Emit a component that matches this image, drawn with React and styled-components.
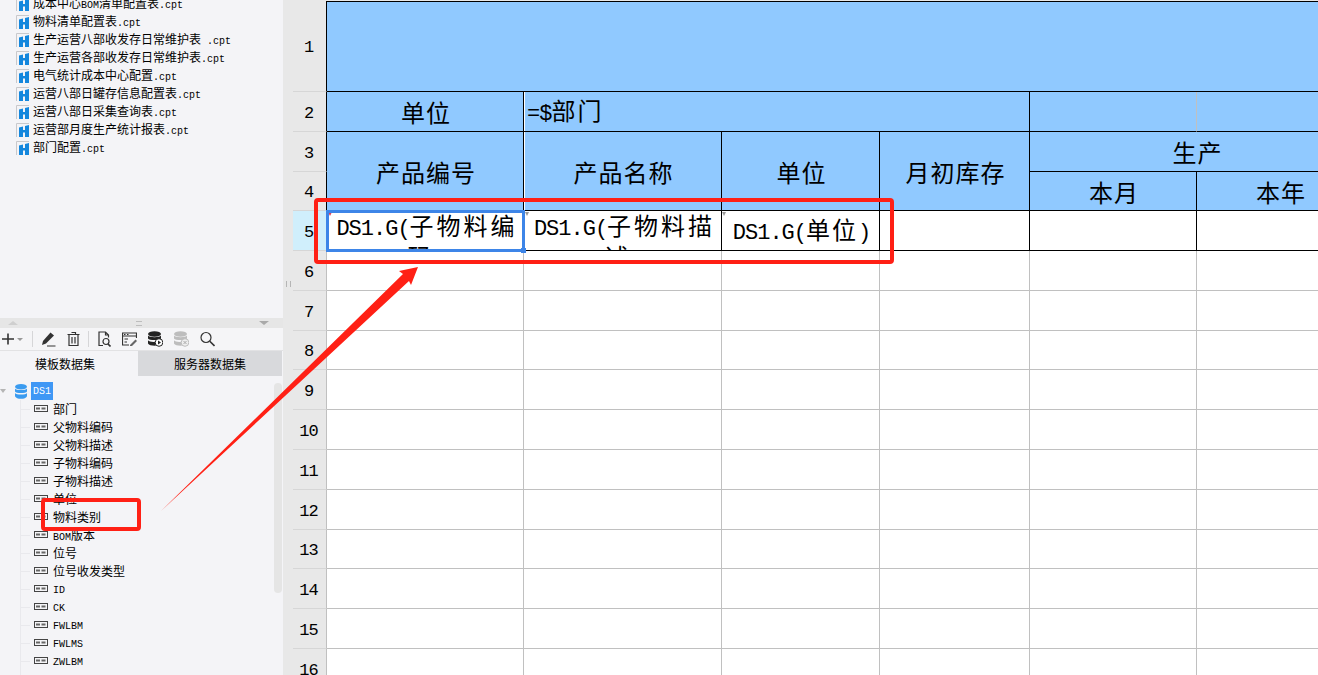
import React from "react";
import styled, { createGlobalStyle } from "styled-components";

const Global = createGlobalStyle`
  html, body { margin: 0; padding: 0; background: #fff; }
  body { font-family: "Noto Sans CJK SC", sans-serif; color: #000; }
`;

const Page = styled.div`
  position: relative;
  display: flex;
  width: 1318px;
  height: 675px;
  overflow: hidden;
`;

const Sidebar = styled.aside`
  flex: 0 0 283px;
  display: flex;
  flex-direction: column;
  height: 675px;
  overflow: hidden;
  background: #f4f4f7;
`;

const FileList = styled.ul`
  flex: 0 0 318px;
  margin: 0;
  padding: 0;
  list-style: none;
  overflow: hidden;
`;

const FileRow = styled.li`
  display: flex;
  align-items: center;
  gap: 4px;
  height: 18.1px;
  padding-left: 16px;
  font-size: 12px;
  line-height: 18px;
  white-space: nowrap;
  &:first-child { margin-top: -5px; }
`;

const Mono = styled.span`
  font-family: "Liberation Mono", monospace;
  font-size: 10px;
  white-space: pre;
`;

const SplitBar = styled.div`
  flex: 0 0 10px;
  display: flex;
  align-items: center;
  justify-content: space-between;
  padding: 0 14px 0 8px;
  background: #e6e6e6;
`;

const Tri = styled.span`
  width: 0;
  height: 0;
  border-left: 5px solid transparent;
  border-right: 5px solid transparent;
  ${(p) => (p.$down ? "border-top: 4px solid #a9a9a9;" : "border-bottom: 4px solid #cfcfcf;")}
`;

const Grip = styled.span`
  width: 6px;
  height: 3px;
  border-top: 1px solid #bdbdbd;
  border-bottom: 1px solid #bdbdbd;
`;

const Toolbar = styled.div`
  flex: 0 0 22px;
  display: flex;
  align-items: center;
  padding-left: 2px;
  border-bottom: 1px solid #e2e2e4;
  background: #f5f5f7;
`;

const ToolIcon = styled.svg`
  flex: none;
  width: ${(p) => p.$w || 16}px;
  height: 16px;
  margin-left: ${(p) => p.$gap || 0}px;
  fill: ${(p) => p.$fill || "none"};
  stroke: ${(p) => (p.$fill ? "none" : "#333")};
  stroke-width: ${(p) => p.$weight || 1.2};
`;

const ToolSep = styled.span`
  flex: none;
  width: 1px;
  height: 16px;
  margin-left: ${(p) => p.$gap}px;
  background: #d6d6d8;
`;

const Tabs = styled.div`
  flex: 0 0 25px;
  display: flex;
  width: 282px;
  font-size: 12px;
`;

const Tab = styled.div`
  display: flex;
  align-items: center;
  justify-content: center;
  width: ${(p) => (p.$active ? 138 : 144)}px;
  padding-right: ${(p) => (p.$active ? 8 : 0)}px;
  box-sizing: border-box;
  background: ${(p) => (p.$active ? "#f4f4f7" : "#d8d9dc")};
`;

const TreeArea = styled.div`
  position: relative;
  flex: 1;
  padding-top: 6px;
  overflow: hidden;
`;

const GuideLine = styled.span`
  position: absolute;
  left: 20px;
  top: 24px;
  bottom: 0;
  width: 1px;
  background: #e9e9ed;
`;

const Scrollbar = styled.span`
  position: absolute;
  left: 274px;
  top: 7px;
  width: 8px;
  height: 210px;
  border-radius: 4px;
  background: #e5e5e5;
`;

const RootRow = styled.div`
  display: flex;
  align-items: center;
  height: 18px;
  font-size: 12px;
`;

const Caret = styled.span`
  width: 0;
  height: 0;
  margin-right: 9px;
  border-left: 3px solid transparent;
  border-right: 3px solid transparent;
  border-top: 4px solid #b5b5b5;
`;

const RootLabel = styled.span`
  display: flex;
  align-items: center;
  justify-content: center;
  width: 22px;
  height: 18px;
  margin-left: 4px;
  color: #fff;
  background: #3f97f5;
`;

const FieldRow = styled.div`
  position: relative;
  display: flex;
  align-items: center;
  gap: 5px;
  height: 18px;
  padding-left: 34px;
  font-size: 12px;
  white-space: nowrap;
  &::before {
    content: "";
    position: absolute;
    left: 21px;
    top: 9px;
    width: 9px;
    height: 1px;
    background: #e9e9ed;
  }
`;

const FieldText = styled.span`
  margin-bottom: ${(p) => (p.$latin ? 4 : 2)}px;
`;

const FieldIcon = () => (
  <svg width="14" height="8" viewBox="0 0 14 8">
    <rect x="0.5" y="0.5" width="13" height="6" fill="none" stroke="#444" />
    <rect x="2" y="2.5" width="4" height="2" fill="#666" />
    <rect x="7.5" y="2.5" width="4" height="2" fill="#666" />
  </svg>
);

const SplitColumn = styled.div`
  position: relative;
  flex: 0 0 10px;
  display: flex;
  align-items: center;
  justify-content: center;
  height: 675px;
  background: #e8e8e8;
`;

const SplitGrip = styled.span`
  width: 3px;
  height: 6px;
  margin-bottom: 108px;
  border-left: 1px solid #b5b5b5;
  border-right: 1px solid #b5b5b5;
`;

const Sheet = styled.div`
  flex: none;
  display: grid;
  grid-template-columns: 34px 197px 198px 158px 150px 167px 167px;
  grid-template-rows: 91px 40px 40px 39px 40px 40px 40px 39px 40px 40px 40px 40px 39px 40px 40px 40px;
  padding-top: 1px;
  background: #e8e8e8;
  font-size: 24px;
  letter-spacing: 1px;
  line-height: 31px;
`;

const RowHead = styled.div`
  grid-column: 1;
  display: flex;
  align-items: center;
  justify-content: center;
  box-sizing: border-box;
  padding: 3px 2px 0 0;
  font-family: "Liberation Mono", monospace;
  font-size: 17px;
  letter-spacing: -1px;
  background: ${(p) => (p.$current ? "#d0effc" : "#e8e8e8")};
  border-bottom: 1px solid #d6d6d6;
  border-right: 1px solid ${(p) => (p.$strong ? "#000" : "#c0c0c0")};
`;

const Cell = styled.div`
  display: flex;
  align-items: ${(p) => (p.$wrap ? "flex-start" : "center")};
  justify-content: ${(p) => (p.$left ? "flex-start" : "center")};
  grid-column: ${(p) => p.$col} / span ${(p) => p.$span || 1};
  grid-row: ${(p) => p.$row} / span ${(p) => p.$rows || 1};
  box-sizing: border-box;
  min-width: 0;
  overflow: hidden;
  padding: ${(p) => (p.$wrap ? "0 4px 0 8px" : p.$left ? "0 0 0 3px" : "0 0 0 2px")};
  text-align: center;
  background: ${(p) => (p.$fill ? "#90c9ff" : "#fff")};
  border-right: 1px solid ${(p) => (p.$soft ? "#c0c0c0" : "#000")};
  border-bottom: 1px solid #000;
  ${(p) => p.$top && "border-top: 1px solid #000;"}
  ${(p) => p.$seam && "box-shadow: inset 1px 0 0 #fff;"}
`;

const Formula = styled.div`
  letter-spacing: ${(p) => (p.$wrap ? 3 : 2)}px;
  ${(p) => p.$wrap && "margin-top: 1px; line-height: 26px;"}
`;

const PlainCell = styled.div`
  background: #fff;
  border-right: 1px solid #c0c0c0;
  border-bottom: 1px solid #c0c0c0;
`;

const Big = styled.span`
  font-family: "Liberation Mono", monospace;
  font-size: 22px;
  letter-spacing: -1px;
`;

const Frame = styled.div`
  position: absolute;
  box-sizing: border-box;
  border: 4px solid #ff2015;
  border-radius: 4px;
  left: ${(p) => p.$x}px;
  top: ${(p) => p.$y}px;
  width: ${(p) => p.$w}px;
  height: ${(p) => p.$h}px;
`;

const Selection = styled.div`
  position: absolute;
  left: 326px;
  top: 210px;
  width: 199px;
  height: 42px;
  box-sizing: border-box;
  border: 3px solid #3d85e8;
  &::after {
    content: "";
    position: absolute;
    right: -4px;
    bottom: -4px;
    width: 5px;
    height: 5px;
    background: #3d85e8;
  }
`;

const CornerMark = styled.span`
  position: absolute;
  left: ${(p) => p.$x}px;
  top: 212px;
  width: 0;
  height: 0;
  border-left: 2px solid transparent;
  border-right: 2px solid transparent;
  border-top: 4px solid ${(p) => p.$color};
`;

const ArrowLayer = styled.svg`
  position: absolute;
  inset: 0;
  width: 1318px;
  height: 675px;
  pointer-events: none;
`;

const DocIcon = () => (
  <svg width="13" height="15" viewBox="0 0 13 15" style={{ flex: "none" }}>
    <path d="M0.5 14V0.5H13" fill="none" stroke="#c9c9cc" />
    <path d="M3 4.5 L7 3.5V7H9V3L13 2V14L9 14V9.5H7V14H3Z" fill="#1487dd" />
  </svg>
);

const DbIcon = ({ color = "#3a9bf0" }) => (
  <svg width="12" height="15" viewBox="0 0 12 15" style={{ flex: "none" }}>
    <ellipse cx="6" cy="2.8" rx="6" ry="2.8" fill={color} />
    <path d="M0 4.4C1 6.4 11 6.4 12 4.4V7.4C11 9.4 1 9.4 0 7.4Z" fill={color} />
    <path d="M0 9C1 11 11 11 12 9V12.2C11 15.6 1 15.6 0 12.2Z" fill={color} />
  </svg>
);

const files = [
  ["成本中心", "BOM", "清单配置表", ".cpt"],
  ["物料清单配置表", "", "", ".cpt"],
  ["生产运营八部收发存日常维护表", "", "", " .cpt"],
  ["生产运营各部收发存日常维护表", "", "", ".cpt"],
  ["电气统计成本中心配置", "", "", ".cpt"],
  ["运营八部日罐存信息配置表", "", "", ".cpt"],
  ["运营八部日采集查询表", "", "", ".cpt"],
  ["运营部月度生产统计报表", "", "", ".cpt"],
  ["部门配置", "", "", ".cpt"],
];

const fields = [
  "部门", "父物料编码", "父物料描述", "子物料编码", "子物料描述", "单位", "物料类别",
  ["BOM", "版本"], "位号", "位号收发类型", ["ID", ""], ["CK", ""], ["FWLBM", ""], ["FWLMS", ""], ["ZWLBM", ""],
];

const rowNumbers = Array.from({ length: 16 }, (_, i) => i + 1);
const plainRows = rowNumbers.slice(5);

export default function App() {
  return (
    <Page>
      <Global />
      <Sidebar>
        <FileList>
          {files.map(([a, b, c, ext]) => (
            <FileRow key={a}>
              <DocIcon />
              <span>
                {a}
                {b && <Mono>{b}</Mono>}
                {c}
                <Mono>{ext}</Mono>
              </span>
            </FileRow>
          ))}
        </FileList>
        <SplitBar>
          <Tri />
          <Grip />
          <Tri $down />
        </SplitBar>
        <Toolbar>
          <ToolIcon $w={12} $weight={1.6} viewBox="0 0 12 16">
            <path d="M0 8H12M6 2.5V13.5" />
          </ToolIcon>
          <ToolIcon $w={6} $gap={3} $fill="#999" viewBox="0 0 6 16">
            <path d="M0 7H6L3 10Z" />
          </ToolIcon>
          <ToolSep $gap={9} />
          <ToolIcon $w={15} $gap={8} $fill="#333" viewBox="0 0 15 16">
            <path d="M9.5 1.5L13 4.5L5 12.5L1 14L2 10Z" />
            <path d="M6 14.5H14.5V15.5H6Z" />
          </ToolIcon>
          <ToolIcon $w={13} $gap={11} viewBox="0 0 13 16">
            <path d="M0.5 3.5H12.5M2 3.5V14.5H11V3.5M4.5 1.5H8.5V3.5M5 6V12.5M8 6V12.5" />
          </ToolIcon>
          <ToolSep $gap={8} />
          <ToolIcon $w={13} $gap={9} viewBox="0 0 13 16">
            <path d="M5 14.5H1V1H7.5L10.5 4V6.5M7.5 1V4H10.5" />
            <circle cx="8" cy="10.5" r="3" />
            <path d="M10 13L12.5 15.5" strokeWidth="1.6" />
          </ToolIcon>
          <ToolIcon $w={15} $gap={11} viewBox="0 0 15 16">
            <path d="M7 14H0.5V2H14.5V7M0.5 5H14.5" />
            <path d="M2 3.5H3.5M5 3.5H6.5M2.5 8H6M2.5 11H5" />
            <path d="M8 14L13.5 8.5L15 10L10 15H8Z" fill="#666" stroke="none" />
          </ToolIcon>
          <ToolIcon $w={15} $gap={11} $fill="#222" viewBox="0 0 15 16">
            <ellipse cx="6.5" cy="3" rx="6.5" ry="2.8" />
            <path d="M0 4.6C1 6.8 12 6.8 13 4.6V7.6C12 9.6 1 9.6 0 7.6Z" />
            <path d="M0 9.2C1 11 6 11.2 8 10.6V14.6C4 14.8 1 14 0 12.4Z" />
            <circle cx="11" cy="11.5" r="3.8" fill="#fff" stroke="#222" strokeWidth="1" />
            <path d="M10 9.5L13 11.5L10 13.5Z" />
          </ToolIcon>
          <ToolIcon $w={15} $gap={11} $fill="#bdbdbd" viewBox="0 0 15 16">
            <ellipse cx="6.5" cy="3" rx="6.5" ry="2.8" />
            <path d="M0 4.6C1 6.8 12 6.8 13 4.6V7.6C12 9.6 1 9.6 0 7.6Z" />
            <path d="M0 9.2C1 11 6 11.2 8 10.6V14.6C4 14.8 1 14 0 12.4Z" />
            <circle cx="11" cy="11.5" r="3.8" fill="#eee" stroke="#bdbdbd" strokeWidth="1" />
            <path d="M9.5 10L12.5 13M12.5 10L9.5 13" stroke="#aaa" strokeWidth="1" />
          </ToolIcon>
          <ToolIcon $w={15} $gap={11} viewBox="0 0 15 16">
            <circle cx="6" cy="6.5" r="5" />
            <path d="M9.8 10.3L14.5 15" strokeWidth="1.6" />
          </ToolIcon>
        </Toolbar>
        <Tabs>
          <Tab $active>模板数据集</Tab>
          <Tab>服务器数据集</Tab>
        </Tabs>
        <TreeArea>
          <GuideLine />
          <Scrollbar />
          <RootRow>
            <Caret />
            <DbIcon />
            <RootLabel>
              <Mono>DS1</Mono>
            </RootLabel>
          </RootRow>
          {fields.map((f) => (
            <FieldRow key={Array.isArray(f) ? f[0] : f}>
              <FieldIcon />
              {Array.isArray(f) ? (
                <FieldText $latin={!f[1]}>
                  <Mono>{f[0]}</Mono>
                  {f[1]}
                </FieldText>
              ) : (
                <FieldText>{f}</FieldText>
              )}
            </FieldRow>
          ))}
        </TreeArea>
      </Sidebar>
      <SplitColumn>
        <SplitGrip />
      </SplitColumn>
      <Sheet>
        {rowNumbers.map((n) => (
          <RowHead key={n} style={{ gridRow: n }} $strong={n <= 5} $current={n === 5}>
            {n}
          </RowHead>
        ))}

        <Cell $col={2} $span={6} $row={1} $fill $top />

        <Cell $col={2} $row={2} $fill>单位</Cell>
        <Cell $col={3} $span={3} $row={2} $fill $left $seam>
          <Formula>
            <Big>=$</Big>部门
          </Formula>
        </Cell>
        <Cell $col={6} $row={2} $fill $soft />
        <Cell $col={7} $row={2} $fill />

        <Cell $col={2} $row={3} $rows={2} $fill>产品编号</Cell>
        <Cell $col={3} $row={3} $rows={2} $fill $seam>产品名称</Cell>
        <Cell $col={4} $row={3} $rows={2} $fill>单位</Cell>
        <Cell $col={5} $row={3} $rows={2} $fill>月初库存</Cell>
        <Cell $col={6} $span={2} $row={3} $fill>生产</Cell>
        <Cell $col={6} $row={4} $fill>本月</Cell>
        <Cell $col={7} $row={4} $fill>本年</Cell>

        <Cell $col={2} $row={5} $wrap>
          <Formula $wrap>
            <Big>DS1.G(</Big>子物料编码<Big>)</Big>
          </Formula>
        </Cell>
        <Cell $col={3} $row={5} $wrap>
          <Formula $wrap>
            <Big>DS1.G(</Big>子物料描述<Big>)</Big>
          </Formula>
        </Cell>
        <Cell $col={4} $row={5}>
          <Formula>
            <Big>DS1.G(</Big>单位<Big>)</Big>
          </Formula>
        </Cell>
        <Cell $col={5} $row={5} />
        <Cell $col={6} $row={5} />
        <Cell $col={7} $row={5} />

        {plainRows.map((r) =>
          [2, 3, 4, 5, 6, 7].map((c) => (
            <PlainCell key={`${r}-${c}`} style={{ gridRow: r, gridColumn: c }} />
          ))
        )}
      </Sheet>

      <CornerMark $x={328} $color="#e0405a" />
      <CornerMark $x={525} $color="#999" />
      <CornerMark $x={722} $color="#999" />
      <Selection />
      <Frame $x={314} $y={198} $w={580} $h={66} />
      <Frame $x={41} $y={498} $w={100} $h={33} />
      <ArrowLayer viewBox="0 0 1318 675">
        <polygon
          points="418,267 399,271 403,274 161,511 409,281 411,285"
          fill="#ff2015"
        />
      </ArrowLayer>
    </Page>
  );
}
